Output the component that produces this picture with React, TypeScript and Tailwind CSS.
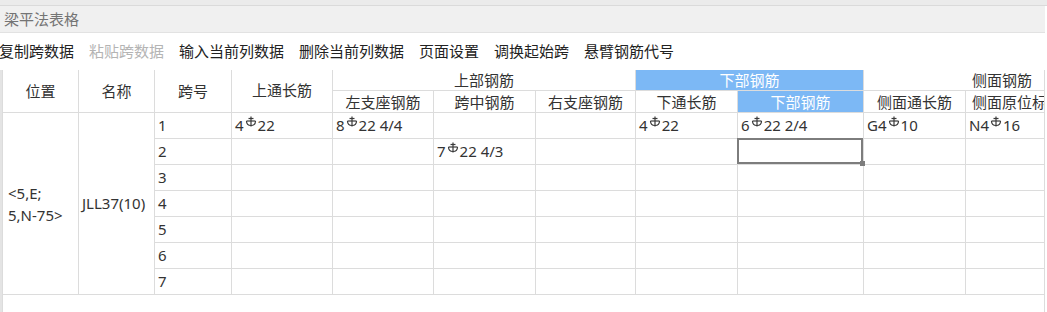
import React from 'react';

const font = "font-['Noto_Sans','Noto_Sans_CJK_SC',sans-serif]";

function Steel() {
  return (
    <svg width="12" height="11" viewBox="0 0 12 11" className="inline-block align-[4px] mx-[1px]" fill="none" stroke="#3a3a3a" strokeWidth="1.2">
      <path d="M6 0.5 V10.5" />
      <path d="M3.5 2.5 H8.5" />
      <path d="M1.5 5 H10.5" />
      <path d="M1.5 5 Q1.5 9.5 6 9.5 Q10.5 9.5 10.5 5" />
    </svg>
  );
}

function Rebar({ n, d, extra }: { n: string; d: string; extra?: string }) {
  return (
    <span className="whitespace-nowrap">
      {n}
      <Steel />
      {d}
      {extra ? ' ' + extra : ''}
    </span>
  );
}

const tools = ['复制跨数据', '粘贴跨数据', '输入当前列数据', '删除当前列数据', '页面设置', '调换起始跨', '悬臂钢筋代号'];

type Row = (React.ReactNode | null)[];

const rows: Row[] = [
  [<Rebar n="4" d="22" />, <Rebar n="8" d="22" extra="4/4" />, null, null, <Rebar n="4" d="22" />, <Rebar n="6" d="22" extra="2/4" />, <Rebar n="G4" d="10" />, <Rebar n="N4" d="16" />],
  [null, null, <Rebar n="7" d="22" extra="4/3" />, null, null, null, null, null],
  [null, null, null, null, null, null, null, null],
  [null, null, null, null, null, null, null, null],
  [null, null, null, null, null, null, null, null],
  [null, null, null, null, null, null, null, null],
  [null, null, null, null, null, null, null, null],
];

const td = 'border border-[#dcdcdc] px-[3px] h-[26px] text-left align-middle whitespace-nowrap';
const th = 'border border-[#dcdcdc] font-normal text-center align-middle whitespace-nowrap overflow-hidden leading-[18px]';

export default function App() {
  return (
    <div className={`w-[1047px] h-[312px] bg-white overflow-hidden text-[15px] text-[#333] ${font}`}>
      <div className="h-[6px] bg-[#ebebeb] border-b border-[#dadada]" />
      <div className="h-[27px] bg-[#f0f0f0] border-b border-[#e2e2e2] flex items-center pl-[4px] text-[#747474] mr-[2px]">
        梁平法表格
      </div>
      <div className="h-[37px] flex items-center gap-[15px] -ml-[1px]">
        {tools.map((t, i) => (
          <span key={t} className={i === 1 ? 'text-[#b4b4b4]' : 'text-[#222]'}>
            {t}
          </span>
        ))}
      </div>
      <div className="flex h-[242px]">
        <div className="w-[2px] bg-[#e4e4e4]" />
        <div className="w-[1043px] overflow-hidden border-x border-[#dcdcdc]">
          <table className="table-fixed border-collapse w-[1141px] -mt-[1px] -ml-[1px]">
            <colgroup>
              <col className="w-[76px]" />
              <col className="w-[76px]" />
              <col className="w-[77px]" />
              <col className="w-[101px]" />
              <col className="w-[101px]" />
              <col className="w-[102px]" />
              <col className="w-[100px]" />
              <col className="w-[102px]" />
              <col className="w-[126px]" />
              <col className="w-[102px]" />
              <col className="w-[178px]" />
            </colgroup>
            <thead>
              <tr className="h-[21px]">
                <th rowSpan={2} className={th}>位置</th>
                <th rowSpan={2} className={th}>名称</th>
                <th rowSpan={2} className={th}>跨号</th>
                <th rowSpan={2} className={`${th} align-top pt-[11px]`}>上通长筋</th>
                <th colSpan={3} className={th}>上部钢筋</th>
                <th colSpan={2} className={`${th} bg-[#7cb8f5] text-white`}>下部钢筋</th>
                <th colSpan={2} className={`${th} text-left pl-[108px]`}>侧面钢筋</th>
              </tr>
              <tr className="h-[22px]">
                <th className={th}>左支座钢筋</th>
                <th className={th}>跨中钢筋</th>
                <th className={th}>右支座钢筋</th>
                <th className={th}>下通长筋</th>
                <th className={`${th} bg-[#7cb8f5] text-white`}>下部钢筋</th>
                <th className={th}>侧面通长筋</th>
                <th className={`${th} text-left pl-[6px]`}>侧面原位标注</th>
              </tr>
            </thead>
            <tbody>
              {rows.map((r, i) => (
                <tr key={i}>
                  {i === 0 && (
                    <>
                      <td rowSpan={7} className={`${td} whitespace-normal leading-[22px] pl-[5px]`}>
                        &lt;5,E;
                        <br />
                        5,N-75&gt;
                      </td>
                      <td rowSpan={7} className={`${td} text-center px-0`}>JLL37(10)</td>
                    </>
                  )}
                  <td className={td}>{i + 1}</td>
                  {r.map((c, j) => (
                    <td key={j} className={`${td} ${i === 1 && j === 5 ? 'relative' : ''}`}>
                      {c}
                      {i === 1 && j === 5 && (
                        <div className="absolute -left-[1px] -top-[1px] right-0 bottom-0 border-2 border-[#7d7d7d]">
                          <div className="absolute -right-[4px] -bottom-[4px] w-[5px] h-[5px] bg-[#7d7d7d]" />
                        </div>
                      )}
                    </td>
                  ))}
                </tr>
              ))}
            </tbody>
          </table>
        </div>
      </div>
    </div>
  );
}
